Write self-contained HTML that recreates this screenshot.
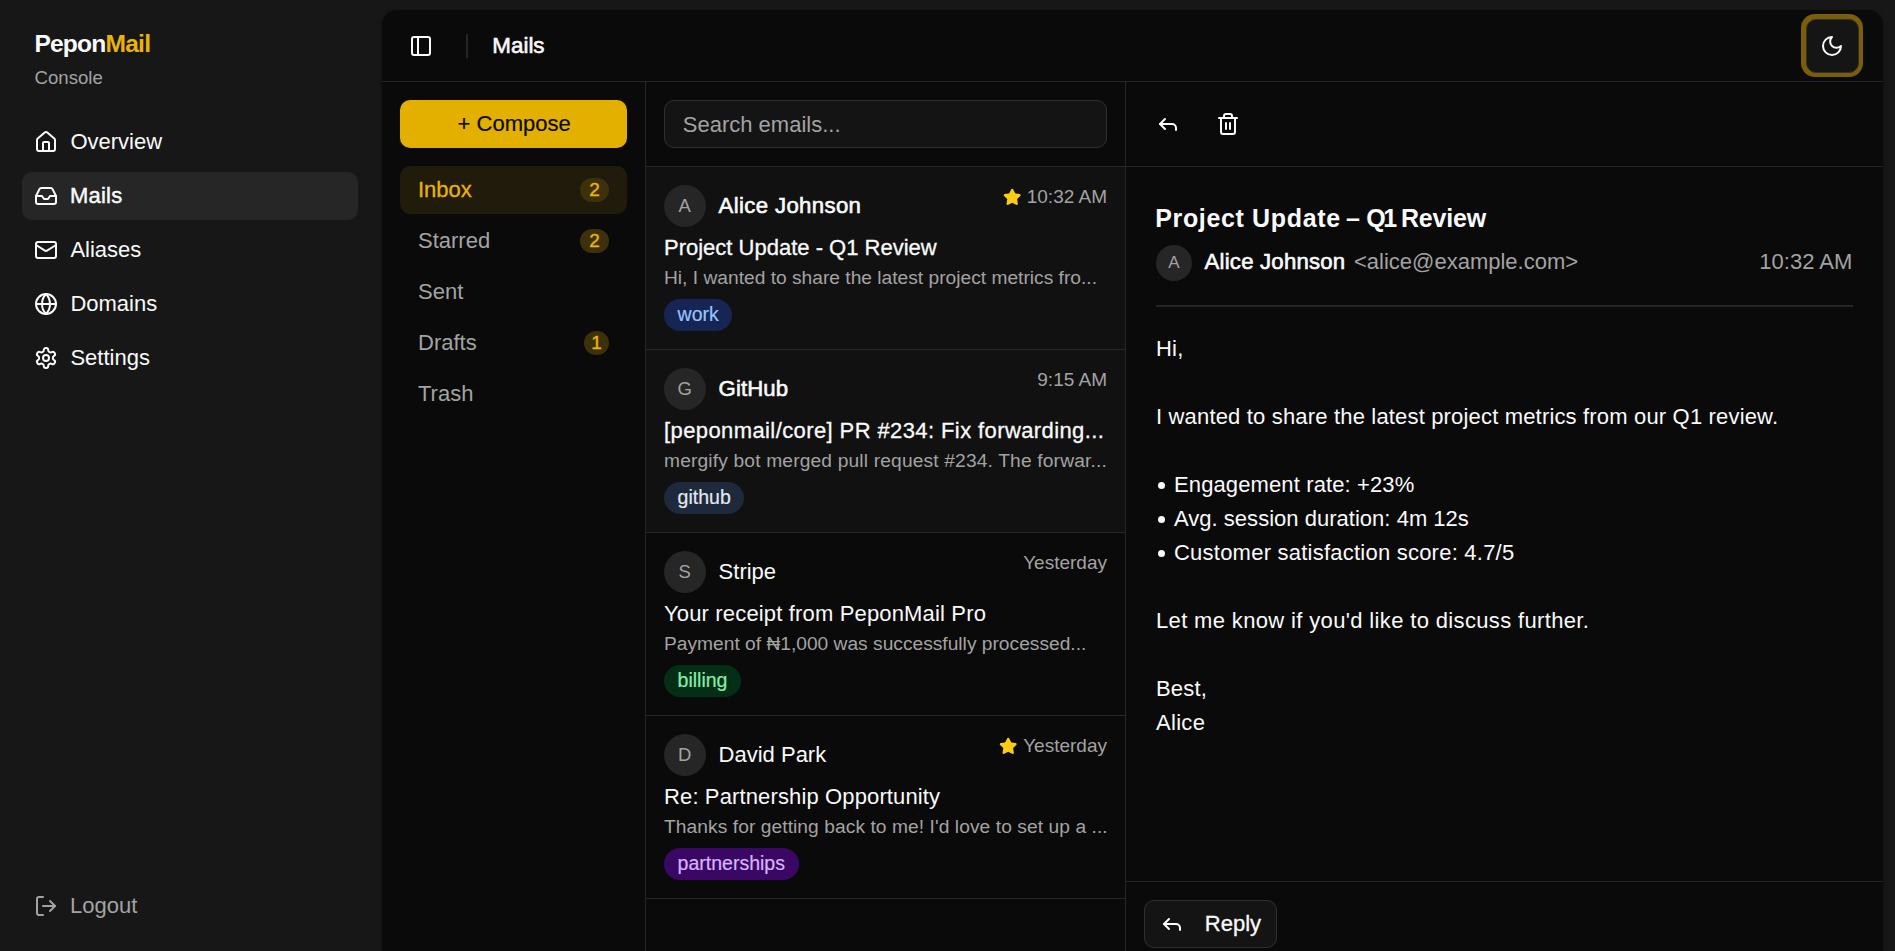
<!DOCTYPE html>
<html><head><meta charset="utf-8">
<style>
*{box-sizing:border-box;margin:0;padding:0}
html,body{width:1895px;height:951px;overflow:hidden;background:#171717;font-family:"Liberation Sans",sans-serif;color:#fafafa}
.a{position:absolute;white-space:nowrap;line-height:1}
svg.i{position:absolute;width:24px;height:24px;fill:none;stroke:currentColor;stroke-width:2;stroke-linecap:round;stroke-linejoin:round}
#main{position:absolute;left:382px;top:10px;width:1501px;height:1000px;background:#0a0a0a;border-radius:15px;box-shadow:0 1px 4px rgba(0,0,0,.35);overflow:hidden}
.nav{position:absolute;left:22px;width:336px;height:48px;border-radius:10px}
.gray{color:#a3a3a3}
.hl{position:absolute;background:#262626}
.badge{position:absolute;height:24px;border-radius:12px;background:#3d310c;color:#eab308;font-size:19px;line-height:24px;text-align:center;-webkit-text-stroke:.4px #eab308}
.item{position:absolute;left:264px;width:479px;height:183px;border-bottom:1px solid #262626}
.av{position:absolute;border-radius:50%;background:#262626;color:#a3a3a3;text-align:center}
.tag{position:absolute;height:32px;border-radius:16px;font-size:19.5px;line-height:30px;padding:0 13.6px;-webkit-text-stroke:.2px currentColor}
.item .av{left:17.6px;top:17.6px;width:42px;height:42px;line-height:42px;font-size:18.5px}
.item .nm{left:72.6px;top:27.6px;font-size:21px}
.item .tm{right:18px;top:20px;font-size:19px;color:#a3a3a3}
.item .sb{left:18px;top:69.5px;font-size:22px}
.item .pv{left:18px;top:100.7px;font-size:19.2px;color:#a3a3a3}
.item .tag{left:18px;top:132px}
.star{position:absolute;width:18.4px;height:18.4px;fill:#facc15;stroke:#facc15;stroke-width:2;stroke-linejoin:round}
.bu{display:inline-block;width:18px;height:34px;vertical-align:top;position:relative}.bu:before{content:"";position:absolute;left:2.2px;top:14.3px;width:7px;height:7px;border-radius:50%;background:#fafafa}
.body{position:absolute;left:774px;top:322px;font-size:22px;line-height:34px;letter-spacing:.2px;white-space:pre}
</style></head><body>
<!-- SIDEBAR -->
<div class="a" style="left:34.4px;top:32px;font-size:24.6px;font-weight:bold;letter-spacing:-.8px">Pepon<span style="color:#eab308">Mail</span></div>
<div class="a gray" style="left:34.6px;top:68.8px;font-size:18.6px">Console</div>

<div class="nav" style="top:172px;background:#262626"></div>

<svg class="i" style="left:34px;top:130px" viewBox="0 0 24 24"><path d="M15 21v-8a1 1 0 0 0-1-1h-4a1 1 0 0 0-1 1v8"/><path d="M3 10a2 2 0 0 1 .709-1.528l7-5.999a2 2 0 0 1 2.582 0l7 5.999A2 2 0 0 1 21 10v9a2 2 0 0 1-2 2H5a2 2 0 0 1-2-2z"/></svg>
<svg class="i" style="left:34px;top:184px" viewBox="0 0 24 24"><polyline points="22 12 16 12 14 15 10 15 8 12 2 12"/><path d="M5.45 5.11 2 12v6a2 2 0 0 0 2 2h16a2 2 0 0 0 2-2v-6l-3.45-6.89A2 2 0 0 0 16.76 4H7.24a2 2 0 0 0-1.79 1.11z"/></svg>
<svg class="i" style="left:34px;top:238px" viewBox="0 0 24 24"><rect width="20" height="16" x="2" y="4" rx="2"/><path d="m22 7-8.97 5.7a1.94 1.94 0 0 1-2.06 0L2 7"/></svg>
<svg class="i" style="left:34px;top:292px" viewBox="0 0 24 24"><circle cx="12" cy="12" r="10"/><path d="M12 2a14.5 14.5 0 0 0 0 20 14.5 14.5 0 0 0 0-20"/><path d="M2 12h20"/></svg>
<svg class="i" style="left:34px;top:346px" viewBox="0 0 24 24"><path d="M12.22 2h-.44a2 2 0 0 0-2 2v.18a2 2 0 0 1-1 1.73l-.43.25a2 2 0 0 1-2 0l-.15-.08a2 2 0 0 0-2.73.73l-.22.38a2 2 0 0 0 .73 2.730l.15.1a2 2 0 0 1 1 1.72v.51a2 2 0 0 1-1 1.74l-.15.09a2 2 0 0 0-.73 2.73l.22.38a2 2 0 0 0 2.73.73l.15-.08a2 2 0 0 1 2 0l.43.25a2 2 0 0 1 1 1.73V20a2 2 0 0 0 2 2h.44a2 2 0 0 0 2-2v-.18a2 2 0 0 1 1-1.73l.43-.25a2 2 0 0 1 2 0l.15.08a2 2 0 0 0 2.73-.73l.22-.39a2 2 0 0 0-.73-2.73l-.15-.08a2 2 0 0 1-1-1.74v-.5a2 2 0 0 1 1-1.74l.15-.09a2 2 0 0 0 .73-2.73l-.22-.38a2 2 0 0 0-2.73-.73l-.15.08a2 2 0 0 1-2 0l-.43-.25a2 2 0 0 1-1-1.73V4a2 2 0 0 0-2-2z"/><circle cx="12" cy="12" r="3"/></svg>

<div class="a" style="left:70.4px;top:131.2px;font-size:22px">Overview</div>
<div class="a" style="left:69.9px;top:185.3px;font-size:22px;letter-spacing:.25px;-webkit-text-stroke:.45px #fafafa">Mails</div>
<div class="a" style="left:70.4px;top:239.3px;font-size:22px">Aliases</div>
<div class="a" style="left:70.4px;top:293.3px;font-size:22px">Domains</div>
<div class="a" style="left:70.4px;top:347.3px;font-size:22px">Settings</div>

<svg class="i" style="left:34px;top:894px;color:#a3a3a3" viewBox="0 0 24 24"><path d="M9 21H5a2 2 0 0 1-2-2V5a2 2 0 0 1 2-2h4"/><polyline points="16 17 21 12 16 7"/><line x1="21" x2="9" y1="12" y2="12"/></svg>
<div class="a gray" style="left:70px;top:895.2px;font-size:22px">Logout</div>

<!-- MAIN -->
<div id="main">
  <div class="hl" style="left:0;top:71px;width:1501px;height:1px"></div>
  <svg class="i" style="left:27px;top:24px" viewBox="0 0 24 24"><rect width="18" height="18" x="3" y="3" rx="2"/><path d="M9 3v18"/></svg>
  <div class="hl" style="left:84px;top:24px;width:2px;height:24px;background:#242624"></div>
  <div class="a" style="left:110.3px;top:25.1px;font-size:22.4px;-webkit-text-stroke:.6px #fafafa">Mails</div>

  <div style="position:absolute;left:1418.6px;top:4.4px;width:62.6px;height:63px;border-radius:14px;background:#7a5e09"></div>
  <div style="position:absolute;left:1423.6px;top:9.2px;width:53px;height:53.4px;border-radius:10px;background:#151515;border:1px solid #303030"></div>
  <svg class="i" style="left:1438px;top:24px" viewBox="0 0 24 24"><path d="M12 3a6 6 0 0 0 9 9 9 9 0 1 1-9-9Z"/></svg>

  <!-- folders -->
  <div class="hl" style="left:263px;top:72px;width:1px;height:928px"></div>
  <div style="position:absolute;left:18px;top:90px;width:227px;height:48px;border-radius:10px;background:#e3b000"></div>
  <div class="a" style="left:75.6px;top:103.4px;font-size:22px;color:#0a0a0a;-webkit-text-stroke:.2px #0a0a0a">+ Compose</div>
  <div style="position:absolute;left:18px;top:156px;width:227px;height:48px;border-radius:10px;background:#201b0a"></div>
  <div class="a" style="left:36px;top:169.4px;font-size:22px;color:#eab308;-webkit-text-stroke:.3px #eab308">Inbox</div>
  <div class="badge" style="left:198px;top:168px;width:29px">2</div>
  <div class="a gray" style="left:36px;top:220.1px;font-size:22px">Starred</div>
  <div class="badge" style="left:198px;top:219px;width:29px">2</div>
  <div class="a gray" style="left:36px;top:271.1px;font-size:22px">Sent</div>
  <div class="a gray" style="left:36px;top:322.1px;font-size:22px">Drafts</div>
  <div class="badge" style="left:202px;top:321px;width:25px">1</div>
  <div class="a gray" style="left:36px;top:373.1px;font-size:22px">Trash</div>

  <!-- list -->
  <div class="hl" style="left:743px;top:72px;width:1px;height:928px"></div>
  <div style="position:absolute;left:282px;top:90px;width:443px;height:48px;border-radius:10px;background:#141414;border:1px solid #303030"></div>
  <div class="a gray" style="left:300.8px;top:103.7px;font-size:22px">Search emails...</div>
  <div class="hl" style="left:264px;top:156px;width:479px;height:1px"></div>

  <div class="item" style="top:157px;background:#111111">
    <div class="av">A</div>
    <div class="a nm" style="font-size:22.2px;top:28.4px;letter-spacing:.35px;-webkit-text-stroke:.6px #fafafa">Alice Johnson</div>
    <svg class="star" style="left:356.7px;top:20.6px" viewBox="0 0 24 24"><path d="M11.525 2.295a.53.53 0 0 1 .95 0l2.31 4.679a2.123 2.123 0 0 0 1.595 1.16l5.166.756a.53.53 0 0 1 .294.904l-3.736 3.638a2.123 2.123 0 0 0-.611 1.878l.882 5.14a.53.53 0 0 1-.771.56l-4.618-2.428a2.122 2.122 0 0 0-1.973 0L6.396 21.01a.53.53 0 0 1-.77-.56l.881-5.139a2.122 2.122 0 0 0-.611-1.879L2.16 9.795a.53.53 0 0 1 .294-.906l5.165-.755a2.122 2.122 0 0 0 1.597-1.16z"/></svg>
    <div class="a tm">10:32 AM</div>
    <div class="a sb" style="-webkit-text-stroke:.3px #fafafa">Project Update - Q1 Review</div>
    <div class="a pv">Hi, I wanted to share the latest project metrics fro...</div>
    <div class="tag" style="background:#172554;color:#93c5fd">work</div>
  </div>
  <div class="item" style="top:340px;background:#111111">
    <div class="av">G</div>
    <div class="a nm" style="font-size:22.2px;top:28.4px;letter-spacing:.1px;-webkit-text-stroke:.6px #fafafa">GitHub</div>
    <div class="a tm">9:15 AM</div>
    <div class="a sb" style="letter-spacing:.4px;-webkit-text-stroke:.3px #fafafa">[peponmail/core] PR #234: Fix forwarding...</div>
    <div class="a pv" style="letter-spacing:.16px">mergify bot merged pull request #234. The forwar...</div>
    <div class="tag" style="background:#1e293b;color:#e2e8f0">github</div>
  </div>
  <div class="item" style="top:523px">
    <div class="av">S</div>
    <div class="a nm" style="font-size:22px">Stripe</div>
    <div class="a tm">Yesterday</div>
    <div class="a sb" style="letter-spacing:.16px">Your receipt from PeponMail Pro</div>
    <div class="a pv">Payment of ₦1,000 was successfully processed...</div>
    <div class="tag" style="background:#052e16;color:#86efac">billing</div>
  </div>
  <div class="item" style="top:706px">
    <div class="av">D</div>
    <div class="a nm" style="font-size:22px">David Park</div>
    <svg class="star" style="left:352.6px;top:20.7px" viewBox="0 0 24 24"><path d="M11.525 2.295a.53.53 0 0 1 .95 0l2.31 4.679a2.123 2.123 0 0 0 1.595 1.16l5.166.756a.53.53 0 0 1 .294.904l-3.736 3.638a2.123 2.123 0 0 0-.611 1.878l.882 5.14a.53.53 0 0 1-.771.56l-4.618-2.428a2.122 2.122 0 0 0-1.973 0L6.396 21.01a.53.53 0 0 1-.77-.56l.881-5.139a2.122 2.122 0 0 0-.611-1.879L2.16 9.795a.53.53 0 0 1 .294-.906l5.165-.755a2.122 2.122 0 0 0 1.597-1.16z"/></svg>
    <div class="a tm">Yesterday</div>
    <div class="a sb" style="letter-spacing:.13px">Re: Partnership Opportunity</div>
    <div class="a pv" style="letter-spacing:.07px">Thanks for getting back to me! I'd love to set up a ...</div>
    <div class="tag" style="background:#3b0764;color:#d8b4fe">partnerships</div>
  </div>

  <!-- detail -->
  <svg class="i" style="left:774px;top:102px" viewBox="0 0 24 24"><polyline points="9 17 4 12 9 7"/><path d="M20 18v-2a4 4 0 0 0-4-4H4"/></svg>
  <svg class="i" style="left:834px;top:102px" viewBox="0 0 24 24"><path d="M3 6h18"/><path d="M19 6v14c0 1-1 2-2 2H7c-1 0-2-1-2-2V6"/><path d="M8 6V4c0-1 1-2 2-2h4c1 0 2 1 2 2v2"/><line x1="10" x2="10" y1="11" y2="17"/><line x1="14" x2="14" y1="11" y2="17"/></svg>
  <div class="hl" style="left:744px;top:156px;width:757px;height:1px"></div>

  <div class="a" style="left:773.2px;top:195.9px;font-size:25px;font-weight:bold;letter-spacing:.65px">Project Update</div>
  <div class="a" style="left:964px;top:195.9px;font-size:25px;font-weight:bold">–</div>
  <div class="a" style="left:984.3px;top:195.9px;font-size:25px;font-weight:bold;letter-spacing:-2.5px">Q1</div>
  <div class="a" style="left:1019px;top:195.9px;font-size:25px;font-weight:bold;letter-spacing:-.2px">Review</div>
  <div class="av" style="left:774px;top:235px;width:36px;height:36px;line-height:36px;font-size:17px">A</div>
  <div class="a" style="left:822.6px;top:241.1px;font-size:22.2px;letter-spacing:.2px;-webkit-text-stroke:.6px #fafafa">Alice Johnson</div>
  <div class="a gray" style="left:972px;top:241.2px;font-size:22px">&lt;alice@example.com&gt;</div>
  <div class="a gray" style="right:30.7px;top:241.2px;font-size:22px">10:32 AM</div>
  <div class="hl" style="left:774px;top:295px;width:697px;height:2px;background:#242624"></div>

  <div class="body">Hi,

<span style="letter-spacing:.17px">I wanted to share the latest project metrics from our Q1 review.</span>

<i class="bu"></i><span style="letter-spacing:.12px">Engagement rate: +23%</span>
<i class="bu"></i><span style="letter-spacing:.02px">Avg. session duration: 4m 12s</span>
<i class="bu"></i><span style="letter-spacing:.23px">Customer satisfaction score: 4.7/5</span>

<span style="letter-spacing:.35px">Let me know if you'd like to discuss further.</span>

Best,
<span style="letter-spacing:.3px">Alice</span></div>

  <div class="hl" style="left:744px;top:871px;width:757px;height:1px"></div>
  <div style="position:absolute;left:762px;top:890px;width:133px;height:48px;border-radius:10px;background:#141414;border:1px solid #303030"></div>
  <svg class="i" style="left:778px;top:902px" viewBox="0 0 24 24"><polyline points="9 17 4 12 9 7"/><path d="M20 18v-2a4 4 0 0 0-4-4H4"/></svg>
  <div class="a" style="left:822.8px;top:903.3px;font-size:22px;-webkit-text-stroke:.3px #fafafa">Reply</div>
</div>
</body></html>
